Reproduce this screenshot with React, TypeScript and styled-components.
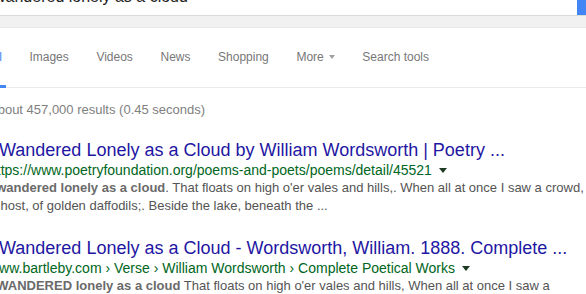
import styled, { createGlobalStyle } from 'styled-components'

const GlobalStyle = createGlobalStyle`
  body {
    margin: 0;
    background: #fff;
    font-family: "Liberation Sans", Arial, sans-serif;
    overflow: hidden;
  }
`

const Page = styled.div`
  width: 586px;
  height: 294px;
  overflow: hidden;
`

const Header = styled.div`
  height: 28px;
  background: #f1f1f1;
  border-bottom: 1px solid #e8e8e8;
  box-sizing: border-box;
`

const SearchBar = styled.div`
  display: flex;
  height: 16px;
  background: #fff;
  border-bottom: 1px solid #dadada;
  box-sizing: border-box;
`

const SearchField = styled.div`
  flex: 1;
  overflow: hidden;
`

const Query = styled.div`
  font-size: 16px;
  line-height: 18px;
  color: #222;
  margin: -12px 0 0 -14px;
  white-space: nowrap;
`

const SearchButton = styled.div`
  width: 9px;
  background: #4285f4;
`

const TabBar = styled.div`
  display: flex;
  align-items: flex-end;
  gap: 27.6px;
  height: 59px;
  border-bottom: 1px solid #ebebeb;
  margin-left: -11.5px;
`

const Tab = styled.div<{ $active?: boolean }>`
  position: relative;
  display: flex;
  align-items: center;
  gap: 5px;
  font-size: 12px;
  line-height: 14px;
  padding-bottom: 24px;
  margin-bottom: -1px;
  color: ${p => (p.$active ? '#4285f4' : '#777')};

  &::after {
    content: '';
    display: ${p => (p.$active ? 'block' : 'none')};
    position: absolute;
    left: 0;
    right: -4px;
    bottom: 0;
    height: 3px;
    background: #4285f4;
  }
`

const Caret = styled.span`
  width: 0;
  height: 0;
  border-left: 3.5px solid transparent;
  border-right: 3.5px solid transparent;
  border-top: 4px solid #a0a0a0;
`

const Content = styled.div`
  margin-left: -11px;
  padding-top: 14px;
`

const Stats = styled.div`
  font-size: 13px;
  line-height: 16px;
  color: #808080;
  margin-bottom: 21px;
  white-space: nowrap;
`

const Result = styled.div`
  margin-bottom: 22px;
  white-space: nowrap;
`

const Title = styled.div`
  font-size: 18px;
  line-height: 22px;
  color: #1f17a3;
`

const Url = styled.div`
  display: flex;
  align-items: center;
  gap: 7px;
  font-size: 14px;
  line-height: 18px;
  color: #006621;
`

const UrlCaret = styled(Caret)`
  border-top: 5px solid #1d3a22;
  border-left-width: 4px;
  border-right-width: 4px;
`

const Snippet = styled.div`
  font-size: 13px;
  line-height: 18px;
  color: #545454;

  b {
    color: #6a6a6a;
  }
`

export default function App() {
  return (
    <Page>
      <GlobalStyle />
      <Header>
        <SearchBar>
          <SearchField>
            <Query>i wandered lonely as a cloud</Query>
          </SearchField>
          <SearchButton />
        </SearchBar>
      </Header>
      <TabBar>
        <Tab $active>All</Tab>
        <Tab>Images</Tab>
        <Tab>Videos</Tab>
        <Tab>News</Tab>
        <Tab>Shopping</Tab>
        <Tab>More <Caret /></Tab>
        <Tab>Search tools</Tab>
      </TabBar>
      <Content>
        <Stats>About 457,000 results (0.45 seconds)</Stats>
        <Result>
          <Title>I Wandered Lonely as a Cloud by William Wordsworth | Poetry ...</Title>
          <Url>https://www.poetryfoundation.org/poems-and-poets/poems/detail/45521 <UrlCaret /></Url>
          <Snippet>
            <b>I wandered lonely as a cloud</b>. That floats on high o'er vales and hills,. When all at once I saw a crowd,
          </Snippet>
          <Snippet>A host, of golden daffodils;. Beside the lake, beneath the ...</Snippet>
        </Result>
        <Result>
          <Title>I Wandered Lonely as a Cloud - Wordsworth, William. 1888. Complete ...</Title>
          <Url>www.bartleby.com › Verse › William Wordsworth › Complete Poetical Works <UrlCaret /></Url>
          <Snippet>
            <b>I WANDERED lonely as a cloud</b> That floats on high o'er vales and hills, When all at once I saw a
          </Snippet>
        </Result>
      </Content>
    </Page>
  )
}
